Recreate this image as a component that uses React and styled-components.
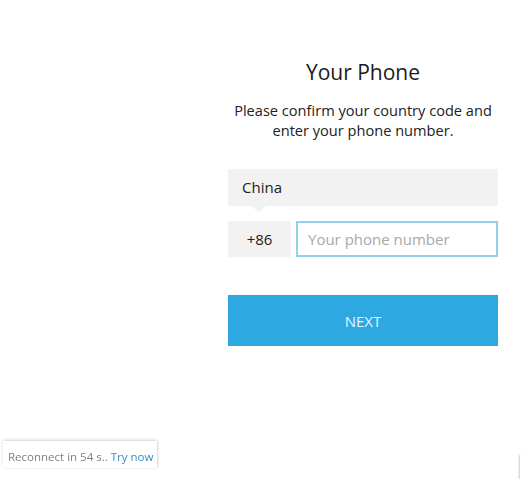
import styled, { createGlobalStyle } from 'styled-components'

const GlobalStyle = createGlobalStyle`
    html, body {
        margin: 0;
        padding: 0;
        background: #ffffff;
        font-family: "Open Sans", "Noto Sans", sans-serif;
        color: #222222;
    }
`

const App = () => {
    return (
        <>
            <GlobalStyle />
            <Page>
                <Form>
                    <Title>Your Phone</Title>
                    <Subtitle>Please confirm your country code and<br />enter your phone number.</Subtitle>
                    <Country>China</Country>
                    <PhoneRow>
                        <Code>+86</Code>
                        <PhoneInput placeholder="Your phone number" />
                    </PhoneRow>
                    <NextButton>NEXT</NextButton>
                </Form>
            </Page>
            <Toast>
                Reconnect in 54 s.. <TryNow>Try now</TryNow>
            </Toast>
            <EdgeBox />
        </>
    );
}

const Page = styled.div`
    display: flex;
    padding: 57px 24px 0 228px;
    height: 479px;
    box-sizing: border-box;
`

const Form = styled.div`
    width: 270px;
    display: flex;
    flex-direction: column;
`

const Title = styled.div`
    font-size: 21px;
    line-height: 30px;
    text-align: center;
    color: #1a1a1a;
    margin-bottom: 13px;
`

const Subtitle = styled.div`
    font-size: 14.6px;
    line-height: 20px;
    text-align: center;
    color: #222222;
    margin-bottom: 29px;
`

const Country = styled.div`
    position: relative;
    height: 37px;
    background: #f2f2f2;
    font-size: 15px;
    line-height: 37px;
    padding-left: 14px;
    margin-bottom: 15px;

    &::after {
        content: '';
        position: absolute;
        left: 24px;
        bottom: -7px;
        border-left: 7px solid transparent;
        border-right: 7px solid transparent;
        border-top: 7px solid #f2f2f2;
    }
`

const PhoneRow = styled.div`
    display: flex;
    gap: 5px;
    height: 36px;
    margin-bottom: 38px;
`

const Code = styled.div`
    width: 63px;
    background: #f2f2f2;
    font-size: 15px;
    line-height: 36px;
    text-align: center;
`

const PhoneInput = styled.input`
    flex: 1;
    min-width: 0;
    box-sizing: border-box;
    border: 2px solid #8fd3ee;
    outline: none;
    padding: 0 10px;
    font-family: "Open Sans", "Noto Sans", sans-serif;
    font-size: 15px;
    color: #222222;

    &::placeholder {
        color: #a8a8a8;
    }
`

const NextButton = styled.button`
    height: 51px;
    border: none;
    background: #2ea8e1;
    color: #e6f5fc;
    font-family: "Open Sans", "Noto Sans", sans-serif;
    font-size: 15px;
    cursor: pointer;
`

const Toast = styled.div`
    position: fixed;
    left: 3px;
    top: 441px;
    width: 154px;
    height: 27px;
    box-sizing: border-box;
    padding: 8px 0 0 5px;
    background: #ffffff;
    box-shadow: 0 -1px 3px rgba(0, 0, 0, 0.15), 1px 0 2px rgba(0, 0, 0, 0.1);
    font-size: 11.5px;
    line-height: 16px;
    color: #808080;
    white-space: nowrap;
`

const TryNow = styled.span`
    color: #3a8fc0;
`

const EdgeBox = styled.div`
    position: fixed;
    left: 520px;
    top: 455px;
    width: 4px;
    height: 30px;
    background: #ffffff;
    box-shadow: -1px 0 2px rgba(0, 0, 0, 0.2);
`

export default App;
